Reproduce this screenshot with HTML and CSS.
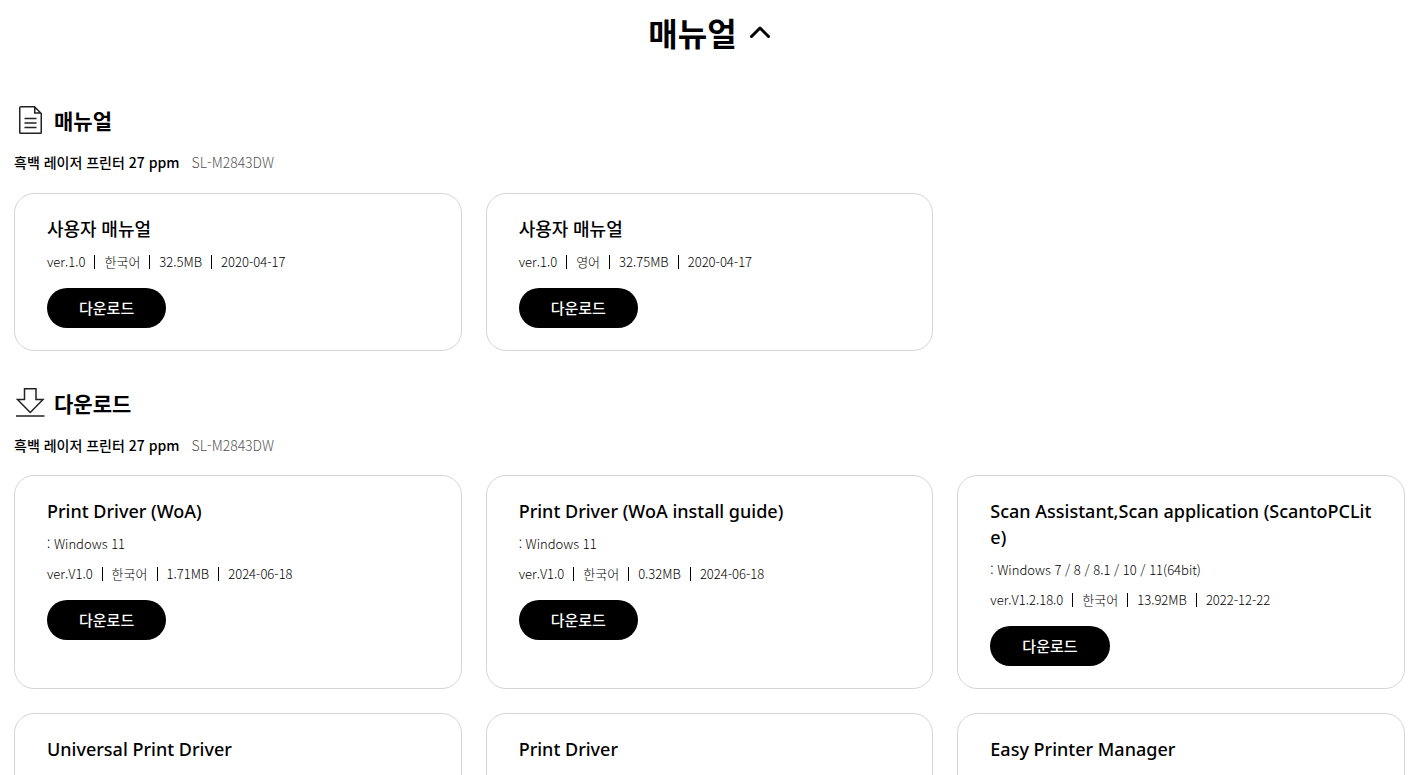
FILE: index.html
```html
<!DOCTYPE html>
<html lang="ko">
<head>
<meta charset="utf-8">
<meta name="viewport" content="width=device-width, initial-scale=1">
<title>매뉴얼</title>
<link rel="stylesheet" href="styles.css">
</head>
<body>
<main class="support">
  <h2 class="support-heading">
    <button class="support-toggle" type="button" aria-expanded="true">매뉴얼
      <svg class="caret" viewBox="0 0 22 14" aria-hidden="true"><path d="M2.5 11.5L11 3L19.5 11.5"/></svg>
    </button>
  </h2>

  <section class="group">
    <h3 class="group-title">
      <svg class="group-icon" viewBox="0 0 32 32" aria-hidden="true"><path d="M7 2.75H20.5L27.25 9.5V28.5Q27.25 29.25 26.5 29.25H6.5Q5.75 29.25 5.75 28.5V3.5Q5.75 2.75 7 2.75ZM20.75 3V9H27M10.5 14.5H22.5M10.5 19H22.5M10.5 23.5H22.5"/></svg>
      매뉴얼
    </h3>
    <p class="product"><strong class="product-name">흑백 레이저 프린터 27 ppm</strong><span class="product-code">SL-M2843DW</span></p>
    <div class="cards">
      <article class="card">
        <h4 class="card-title">사용자 매뉴얼</h4>
        <ul class="meta"><li>ver.1.0</li><li>한국어</li><li>32.5MB</li><li>2020-04-17</li></ul>
        <button class="download" type="button">다운로드</button>
      </article>
      <article class="card">
        <h4 class="card-title">사용자 매뉴얼</h4>
        <ul class="meta"><li>ver.1.0</li><li>영어</li><li>32.75MB</li><li>2020-04-17</li></ul>
        <button class="download" type="button">다운로드</button>
      </article>
    </div>
  </section>

  <section class="group">
    <h3 class="group-title">
      <svg class="group-icon" viewBox="0 0 32 32" aria-hidden="true"><path d="M10.5 1.75H22V12.5H29L16.25 25.5L3.5 12.5H10.5ZM2 29H30.5"/></svg>
      다운로드
    </h3>
    <p class="product"><strong class="product-name">흑백 레이저 프린터 27 ppm</strong><span class="product-code">SL-M2843DW</span></p>
    <div class="cards">
      <article class="card">
        <h4 class="card-title">Print Driver (WoA)</h4>
        <p class="system">: Windows 11</p>
        <ul class="meta"><li>ver.V1.0</li><li>한국어</li><li>1.71MB</li><li>2024-06-18</li></ul>
        <button class="download" type="button">다운로드</button>
      </article>
      <article class="card">
        <h4 class="card-title">Print Driver (WoA install guide)</h4>
        <p class="system">: Windows 11</p>
        <ul class="meta"><li>ver.V1.0</li><li>한국어</li><li>0.32MB</li><li>2024-06-18</li></ul>
        <button class="download" type="button">다운로드</button>
      </article>
      <article class="card">
        <h4 class="card-title">Scan Assistant,Scan application (ScantoPCLite)</h4>
        <p class="system">: Windows 7 / 8 / 8.1 / 10 / 11(64bit)</p>
        <ul class="meta"><li>ver.V1.2.18.0</li><li>한국어</li><li>13.92MB</li><li>2022-12-22</li></ul>
        <button class="download" type="button">다운로드</button>
      </article>
      <article class="card">
        <h4 class="card-title">Universal Print Driver</h4>
      </article>
      <article class="card">
        <h4 class="card-title">Print Driver</h4>
      </article>
      <article class="card">
        <h4 class="card-title">Easy Printer Manager</h4>
      </article>
    </div>
  </section>
</main>
</body>
</html>
```
FILE: styles.css
```css
* {
  box-sizing: border-box;
  margin: 0;
  padding: 0;
}

body {
  background: #fff;
  color: #000;
  font-family: "Noto Sans CJK KR", sans-serif;
  font-size: 13px;
  line-height: 20px;
}

.support {
  padding: 8px 14px 24px;
}

.support-heading {
  display: flex;
  justify-content: center;
}

.support-toggle {
  display: flex;
  align-items: center;
  gap: 12px;
  border: 0;
  background: none;
  color: inherit;
  font-family: inherit;
  font-size: 32px;
  font-weight: 700;
  line-height: 48px;
  cursor: pointer;
}

.caret {
  width: 22px;
  height: 14px;
  fill: none;
  stroke: #000;
  stroke-width: 3;
  stroke-linecap: round;
  stroke-linejoin: round;
}

.group {
  margin-top: 36px;
}

.support-heading + .group {
  margin-top: 48px;
}

.group-title {
  display: flex;
  align-items: center;
  gap: 8px;
  font-size: 21px;
  font-weight: 700;
  line-height: 32px;
}

.group-icon {
  width: 32px;
  height: 32px;
  fill: none;
  stroke: #222;
  stroke-width: 1.5;
}

.product {
  display: flex;
  align-items: center;
  gap: 12px;
  margin: 16px 0 21px;
  font-size: 14px;
}

.group + .group .product {
  margin-bottom: 20px;
}

.product-name {
  font-weight: 500;
}

.product-code {
  color: #555;
  font-weight: 300;
}

.cards {
  display: grid;
  grid-template-columns: repeat(3, minmax(0, 1fr));
  gap: 24px;
}

.card {
  display: flex;
  flex-direction: column;
  align-items: flex-start;
  min-height: 158px;
  padding: 22px 32px;
  border: 1px solid #d5d5d5;
  border-radius: 20px;
}

.card-title {
  font-family: "Noto Sans", "Noto Sans CJK KR", sans-serif;
  font-size: 18px;
  font-weight: 500;
  line-height: 26px;
  word-break: break-all;
}

.system,
.meta {
  margin-top: 10px;
  font-weight: 300;
}

.meta {
  display: flex;
  align-items: center;
  list-style: none;
}

.meta li {
  display: flex;
  align-items: center;
}

.meta li + li::before {
  content: "";
  width: 1px;
  height: 14px;
  margin: 0 9px;
  background: #000;
}

.download {
  height: 40px;
  margin-top: 16px;
  padding: 0 32px;
  border: 0;
  border-radius: 20px;
  background: #000;
  color: #fff;
  font-family: inherit;
  font-size: 15px;
  font-weight: 500;
  line-height: 20px;
  cursor: pointer;
}
```
